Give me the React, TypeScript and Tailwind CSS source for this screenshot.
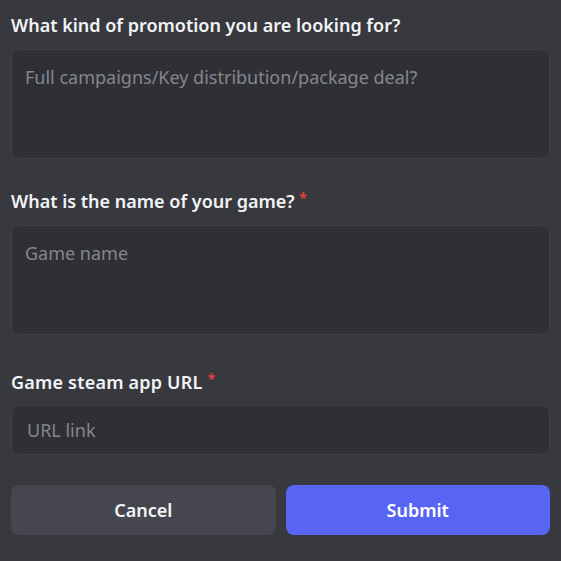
export default function App() {
  const font = { fontFamily: '"Noto Sans", "Open Sans", sans-serif' };
  return (
    <div className="w-[561px] h-[561px] bg-[#38393f] px-[11px] pt-[13px] overflow-hidden" style={font}>
      <label className="block text-[18px] leading-[24px] font-semibold text-[#f2f3f5]">
        What kind of promotion you are looking for?
      </label>
      <div className="mt-[12px] h-[110px] rounded-lg border border-[#3f4047] bg-[#2f3036] px-[13px] pt-[15px] text-[18px] leading-[24px] text-[#85868c]">
        Full campaigns/Key distribution/package deal?
      </div>

      <label className="mt-[30px] block text-[18px] leading-[24px] font-semibold text-[#f2f3f5]">
        What is the name of your game?{" "}
        <span className="align-top text-[14px] leading-[18px] text-[#f23f43]">*</span>
      </label>
      <div className="mt-[12px] h-[110px] rounded-lg border border-[#3f4047] bg-[#2f3036] px-[13px] pt-[15px] text-[18px] leading-[24px] text-[#85868c]">
        Game name
      </div>

      <label className="mt-[35px] block text-[18px] leading-[24px] font-semibold tracking-[0.2px] text-[#f2f3f5]">
        Game steam app URL{" "}
        <span className="align-top text-[14px] leading-[18px] text-[#f23f43]">*</span>
      </label>
      <div className="mt-[11px] h-[50px] rounded-lg border border-[#3f4047] bg-[#2f3036] px-[15px] flex items-center text-[18px] leading-[24px] text-[#85868c]">
        URL link
      </div>

      <div className="mt-[30px] flex gap-[10px]">
        <button className="flex-1 h-[50px] rounded-lg bg-[#46474e] text-[18px] font-semibold text-[#f2f3f5]">
          Cancel
        </button>
        <button className="flex-1 h-[50px] rounded-lg bg-[#5865f2] text-[18px] font-semibold text-white">
          Submit
        </button>
      </div>
    </div>
  );
}
